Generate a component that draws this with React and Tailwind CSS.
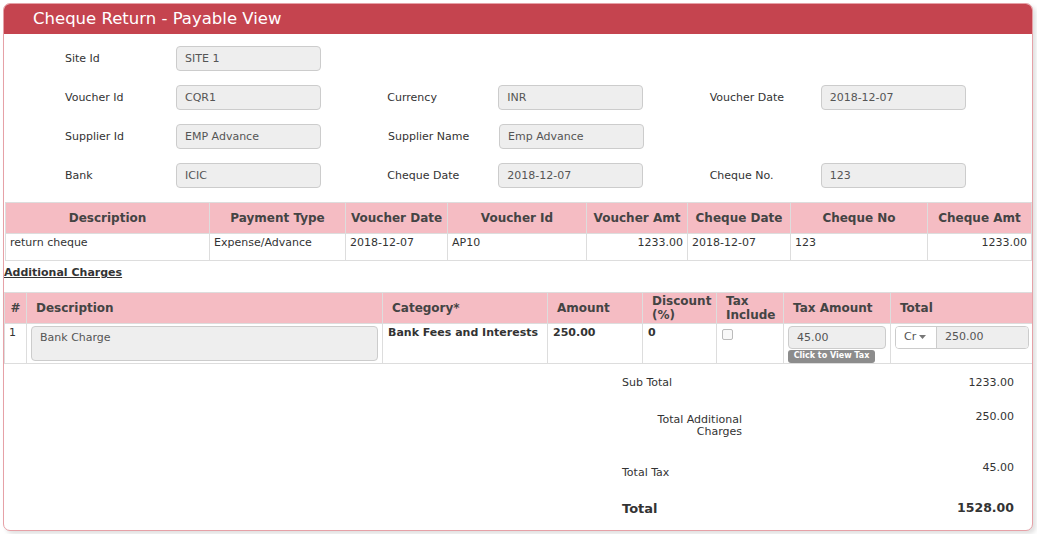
const fields = [
  [["Site Id", "SITE 1"]],
  [["Voucher Id", "CQR1"], ["Currency", "INR"], ["Voucher Date", "2018-12-07"]],
  [["Supplier Id", "EMP Advance"], ["Supplier Name", "Emp Advance"]],
  [["Bank", "ICIC"], ["Cheque Date", "2018-12-07"], ["Cheque No.", "123"]],
]

const chequeCols = [
  ["Description", "w-[204px]", "text-left", "return cheque"],
  ["Payment Type", "w-[136px]", "text-left", "Expense/Advance"],
  ["Voucher Date", "w-[102px]", "text-left", "2018-12-07"],
  ["Voucher Id", "w-[139px]", "text-left", "AP10"],
  ["Voucher Amt", "w-[101px]", "text-right", "1233.00"],
  ["Cheque Date", "w-[103px]", "text-left", "2018-12-07"],
  ["Cheque No", "w-[137px]", "text-left", "123"],
  ["Cheque Amt", "w-[104px]", "text-right", "1233.00"],
]

function Field({ label, value }) {
  return (
    <div className="flex items-center w-[323px]">
      <div className="w-[111px] pt-[2px] text-[11px] text-[#333]">{label}</div>
      <div className="w-[145px] h-[25px] bg-[#eee] border border-[#ccc] rounded-[4px] px-[8px] pt-[2px] flex items-center text-[11px] text-[#555]">
        {value}
      </div>
    </div>
  )
}

export default function App() {
  return (
    <div className="bg-white min-h-screen p-[3px]" style={{ fontFamily: '"DejaVu Sans", Verdana, sans-serif' }}>
      <div className="w-[1030px] h-[528px] border border-[#e6a1a7] rounded-[7px] bg-white overflow-hidden shadow-[3px_3px_4px_rgba(0,0,0,0.12)]">
        {/* Header */}
        <div className="h-[30px] bg-[#c5444f] flex items-center pl-[29px] text-white text-[16.5px]">
          Cheque Return - Payable View
        </div>

        {/* Form */}
        <div className="pt-[12px] pl-[61px] flex flex-col gap-[14px]">
          {fields.map((row, i) => (
            <div key={i} className="flex">
              {row.map(([l, v]) => (
                <Field key={l} label={l} value={v} />
              ))}
            </div>
          ))}
        </div>

        {/* Cheque table */}
        <div className="mt-[14px] pl-px">
          <table className="border-collapse table-fixed w-[1027px] text-[11px] text-[#333]">
            <thead>
              <tr className="bg-[#f5bcc3] h-[31px]">
                {chequeCols.map(([h, w]) => (
                  <th key={h} className={`${w} border border-[#ddd] text-center font-bold text-[12px] text-[#444]`}>
                    {h}
                  </th>
                ))}
              </tr>
            </thead>
            <tbody>
              <tr className="h-[27px]">
                {chequeCols.map(([h, w, a, v]) => (
                  <td key={h} className={`${a} align-top border border-[#ddd] px-[4px] pt-[1px]`}>
                    {v}
                  </td>
                ))}
              </tr>
            </tbody>
          </table>
        </div>

        <div className="mt-[4px] text-[11px] font-bold underline text-[#333]">Additional Charges</div>

        {/* Additional charges table */}
        <table className="mt-[10px] border-collapse table-fixed w-[1029px] text-[11px] text-[#333]">
          <thead>
            <tr className="bg-[#f5bcc3] h-[31px] text-[12px] text-[#444] leading-[14px]">
              <th className="w-[22px] border border-[#ddd] text-center">#</th>
              <th className="w-[356px] border border-[#ddd] text-left px-[9px]">Description</th>
              <th className="w-[165px] border border-[#ddd] text-left px-[9px]">Category*</th>
              <th className="w-[95px] border border-[#ddd] text-left px-[9px]">Amount</th>
              <th className="w-[74px] border border-[#ddd] text-left px-[9px]">Discount (%)</th>
              <th className="w-[67px] border border-[#ddd] text-left px-[9px]">Tax Include</th>
              <th className="w-[107px] border border-[#ddd] text-left px-[9px]">Tax Amount</th>
              <th className="w-[143px] border border-[#ddd] text-left px-[9px]">Total</th>
            </tr>
          </thead>
          <tbody>
            <tr className="h-[40px] align-top">
              <td className="border border-[#ddd] px-[4px] pt-[1px]">1</td>
              <td className="border border-[#ddd] px-[4px] pt-[2px]">
                <div className="h-[35px] bg-[#eee] border border-[#ccc] rounded-[4px] px-[8px] pt-[3px] text-[#555]">Bank Charge</div>
              </td>
              <td className="border border-[#ddd] px-[5px] pt-[1px] font-bold">Bank Fees and Interests</td>
              <td className="border border-[#ddd] px-[5px] pt-[1px] font-bold">250.00</td>
              <td className="border border-[#ddd] px-[5px] pt-[1px] font-bold">0</td>
              <td className="border border-[#ddd] px-[5px] pt-[5px]">
                <div className="w-[11px] h-[11px] border border-[#bbb] rounded-[2px] bg-[#f8f8f8]" />
              </td>
              <td className="border border-[#ddd] px-[4px] pt-[2px] leading-none">
                <div className="h-[23px] w-[98px] bg-[#eee] border border-[#ccc] rounded-[4px] px-[8px] flex items-center text-[11px] text-[#555]">45.00</div>
                <div className="mt-[1px] w-[87px] h-[13px] bg-[#8c8c8c] rounded-[3px] text-white text-[8px] font-bold flex items-center justify-center">
                  Click to View Tax
                </div>
              </td>
              <td className="border border-[#ddd] px-[4px] pt-[2px]">
                <div className="flex h-[23px] w-[134px] border border-[#ccc] rounded-[4px] overflow-hidden">
                  <div className="w-[41px] bg-white flex items-center pl-[8px] gap-[3px] text-[#555] border-r border-[#ccc]">
                    Cr
                    <svg width="7" height="4" viewBox="0 0 7 4"><path d="M0 0h7L3.5 4z" fill="#777" /></svg>
                  </div>
                  <div className="flex-1 bg-[#eee] flex items-center pl-[8px] text-[#555]">250.00</div>
                </div>
              </td>
            </tr>
          </tbody>
        </table>

        {/* Summary */}
        <div className="ml-[618px] w-[392px] text-[11px] text-[#333]">
          <div className="flex justify-between mt-[11px]">
            <span>Sub Total</span>
            <span>1233.00</span>
          </div>
          <div className="flex justify-between mt-[18px]">
            <span className="w-[120px] text-right mt-[5px] leading-[12px]">Total Additional Charges</span>
            <span>250.00</span>
          </div>
          <div className="flex justify-between mt-[22px]">
            <span className="mt-[5px]">Total Tax</span>
            <span>45.00</span>
          </div>
          <div className="flex justify-between items-center mt-[17px] font-bold">
            <span className="text-[13px]">Total</span>
            <span className="text-[12.5px]">1528.00</span>
          </div>
        </div>
      </div>
    </div>
  )
}
